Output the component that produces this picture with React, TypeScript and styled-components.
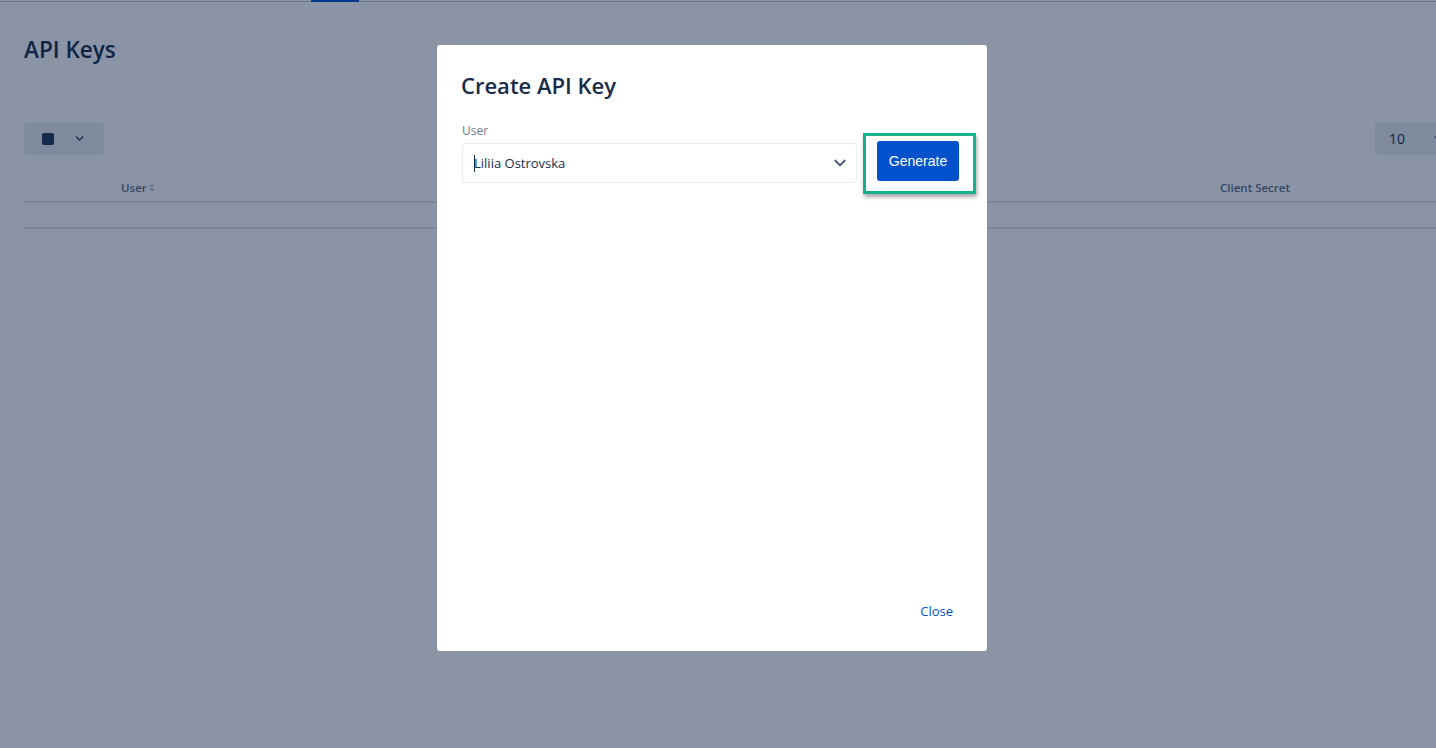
import React from "react";
import styled, { createGlobalStyle } from "styled-components";

const Global = createGlobalStyle`
  html, body { margin: 0; padding: 0; background: #fff; overflow: hidden; }
  body { font-family: "Open Sans", "Noto Sans", sans-serif; color: #172b4d; }
  * { box-sizing: border-box; }
`;

const Page = styled.div`
  width: 1525px;
  height: 748px;
  display: flex;
  flex-direction: column;
`;

const TopNav = styled.div`
  display: flex;
  height: 2px;
  border-bottom: 1px solid #c1c7d0;
`;

const NavSpacer = styled.div`
  width: 311px;
`;

const NavActive = styled.div`
  width: 48px;
  height: 2px;
  background: #0052cc;
`;

const Content = styled.div`
  padding: 0 24px;
  display: flex;
  flex-direction: column;
`;

const PageTitle = styled.h1`
  margin: 34px 0 0;
  font-size: 22.5px;
  font-weight: 600;
  line-height: 28px;
  color: #172b4d;
`;

const Toolbar = styled.div`
  margin-top: 58px;
  display: flex;
  justify-content: space-between;
  align-items: center;
`;

const BulkButton = styled.div`
  width: 80px;
  height: 32px;
  background: #ebecf0;
  border-radius: 3px;
  display: flex;
  align-items: center;
  padding-left: 18px;
  gap: 20px;
`;

const Square = styled.div`
  width: 12px;
  height: 12px;
  border-radius: 2px;
  background: #253858;
`;

const PageSize = styled.div`
  width: 96px;
  height: 33px;
  margin-right: 30px;
  background: #ebecf0;
  border-radius: 3px;
  display: flex;
  align-items: center;
  padding-left: 14px;
  font-size: 14px;
  color: #172b4d;
  gap: 28px;
`;

const Table = styled.div`
  margin-top: 18px;
  display: flex;
  flex-direction: column;
`;

const HeadRow = styled.div`
  display: grid;
  grid-template-columns: 300px 896px 1fr;
  height: 30px;
  align-items: center;
  border-bottom: 2px solid #dfe1e6;
  font-size: 11.5px;
  font-weight: 600;
  color: #5e6c84;
`;

const HeadCell = styled.div<{ $pad: number }>`
  padding-left: ${(p) => p.$pad}px;
  display: flex;
  align-items: center;
  gap: 2px;
`;

const EmptyRow = styled.div`
  height: 26px;
  border-bottom: 2px solid #dfe1e6;
`;

const Blanket = styled.div`
  position: fixed;
  inset: 0;
  background: rgba(9, 30, 66, 0.476);
  display: flex;
  justify-content: center;
  align-items: flex-start;
  padding: 45px 12px 0 0;
`;

const Modal = styled.div`
  width: 550px;
  height: 606px;
  background: #fff;
  border-radius: 3px;
  display: flex;
  flex-direction: column;
  padding: 24px;
`;

const ModalTitle = styled.h2`
  margin: 0;
  font-size: 22px;
  font-weight: 600;
  line-height: 32px;
  color: #172b4d;
`;

const FormRow = styled.div`
  margin-top: 22px;
  display: flex;
  align-items: flex-start;
`;

const Field = styled.div`
  display: flex;
  flex-direction: column;
  margin-left: 1px;
  flex-shrink: 0;
`;

const Label = styled.label`
  font-size: 12px;
  line-height: 16px;
  color: #6b778c;
  margin-bottom: 4px;
`;

const Select = styled.div`
  width: 395px;
  height: 40px;
  border: 1px solid #ebecf0;
  border-radius: 3px;
  background: #fff;
  display: flex;
  align-items: center;
  padding: 0 8px 0 11px;
  font-size: 13px;
  color: #172b4d;
`;

const Caret = styled.span`
  display: inline-block;
  width: 1px;
  height: 17px;
  background: #172b4d;
  margin-right: -1px;
`;

const SelectValue = styled.span`
  flex: 1;
  display: flex;
  align-items: center;
`;

const Highlight = styled.div`
  flex-shrink: 0;
  margin-left: 6px;
  margin-top: 10px;
  width: 113px;
  height: 61px;
  border: 3px solid #14b18c;
  box-shadow: 1px 3px 4px rgba(0, 0, 0, 0.35);
  display: flex;
  align-items: flex-start;
  padding: 5px 0 0 11px;
`;

const PrimaryButton = styled.button`
  width: 82px;
  height: 40px;
  border: none;
  border-radius: 3px;
  background: #0052cc;
  color: #fff;
  font-family: "Liberation Sans", Arial, sans-serif;
  font-size: 14px;
  cursor: pointer;
`;

const Body = styled.div`
  flex: 1;
`;

const Footer = styled.div`
  display: flex;
  justify-content: flex-end;
`;

const LinkButton = styled.button`
  border: none;
  background: none;
  color: #0052cc;
  font-family: "Open Sans", "Noto Sans", sans-serif;
  font-size: 13px;
  height: 32px;
  padding: 0 10px;
  margin-right: 0;
`;

const Chevron = ({ size = 12, color = "#42526e" }: { size?: number; color?: string }) => (
  <svg width={size} height={size} viewBox="0 0 24 24" fill="none">
    <path d="M5 8.5l7 7 7-7" stroke={color} strokeWidth="3" strokeLinecap="round" strokeLinejoin="round" />
  </svg>
);

const SortIcon = () => (
  <svg width="6" height="9" viewBox="0 0 6 9">
    <path d="M3 1L5.5 3.5H0.5Z M3 8L0.5 5.5H5.5Z" fill="#a5adba" />
  </svg>
);

export default function App() {
  return (
    <>
      <Global />
      <Page>
        <TopNav>
          <NavSpacer />
          <NavActive />
        </TopNav>
        <Content>
          <PageTitle>API Keys</PageTitle>
          <Toolbar>
            <BulkButton>
              <Square />
              <Chevron size={11} color="#253858" />
            </BulkButton>
            <PageSize>
              10
              <Chevron size={11} color="#253858" />
            </PageSize>
          </Toolbar>
          <Table>
            <HeadRow>
              <HeadCell $pad={97}>
                User <SortIcon />
              </HeadCell>
              <HeadCell $pad={0} />
              <HeadCell $pad={0}>Client Secret</HeadCell>
            </HeadRow>
            <EmptyRow />
          </Table>
        </Content>
      </Page>
      <Blanket>
        <Modal>
          <ModalTitle>Create API Key</ModalTitle>
          <FormRow>
            <Field>
              <Label>User</Label>
              <Select>
                <SelectValue>
                  <Caret />
                  Liliia Ostrovska
                </SelectValue>
                <Chevron size={16} />
              </Select>
            </Field>
            <Highlight>
              <PrimaryButton>Generate</PrimaryButton>
            </Highlight>
          </FormRow>
          <Body />
          <Footer>
            <LinkButton>Close</LinkButton>
          </Footer>
        </Modal>
      </Blanket>
    </>
  );
}
